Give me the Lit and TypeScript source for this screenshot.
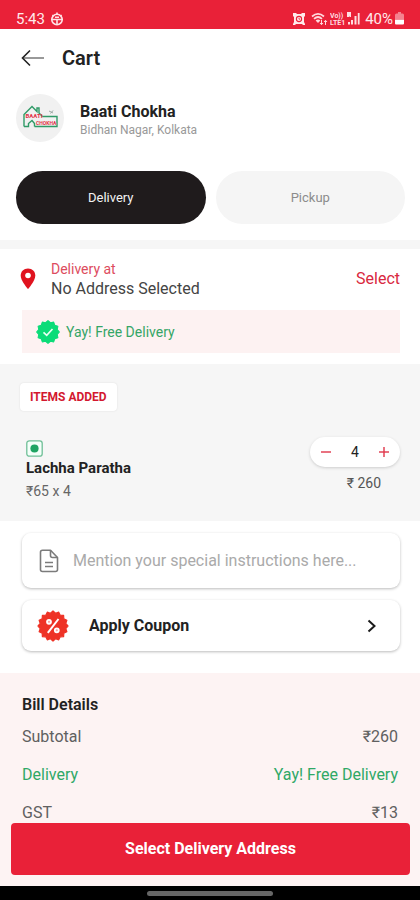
import { LitElement, html, css, svg } from "lit";
import { customElement, state } from "lit/decorators.js";

type Mode = "Delivery" | "Pickup";

/** Outline of a round badge with a scalloped edge. */
function badgePath(teeth: number, outer: number, inner: number): string {
  const points: string[] = [];
  for (let i = 0; i < teeth * 2; i++) {
    const r = i % 2 ? inner : outer;
    const a = (Math.PI * i) / teeth - Math.PI / 2;
    points.push(`${(16 + r * Math.cos(a)).toFixed(2)} ${(16 + r * Math.sin(a)).toFixed(2)}`);
  }
  return `M${points.join("L")}Z`;
}

const backIcon = html`<svg width="24" height="18" viewBox="0 0 24 18" fill="none" aria-hidden="true">
  <path d="M2 9H23" stroke="#777" stroke-width="1.5" />
  <path d="M9 1.5L1.5 9L9 16.5" stroke="#222" stroke-width="1.6" />
</svg>`;

const globeIcon = html`<svg width="14" height="14" viewBox="0 0 14 14" fill="none" stroke="#ffe3e6" stroke-width="1.6" aria-hidden="true">
  <circle cx="7" cy="7.5" r="5.2" />
  <path d="M1 7.5H13M7 7.5V12.5M5 5.2H9M2.4 3L3.6 4M11.6 3L10.4 4M7 .6V2.5" />
</svg>`;

const alarmIcon = html`<svg width="12" height="12" viewBox="0 0 12 12" aria-hidden="true">
  <path d="M0 0H3L4 1H8L9 0H12V3L11 4V9L12 11V12H10L9 11H3L2 12H0V11L1 9V4L0 3Z" fill="#ffe9eb" />
  <path d="M1 1H11V11H1Z" fill="#ffe9eb" />
  <circle cx="6" cy="6" r="2.6" fill="none" stroke="#e92138" stroke-width="1.1" />
  <path d="M6 4.8V6.2H7.2" fill="none" stroke="#e92138" stroke-width=".8" />
</svg>`;

const wifiIcon = html`<svg width="17" height="14" viewBox="0 0 17 14" fill="none" stroke="#ffd9dd" aria-hidden="true">
  <path d="M1 4.5Q7 -.8 13 4.5M3 6.8Q7 3.2 11 6.8" stroke-width="1.7" />
  <path d="M4.6 8.6Q7 6.4 9.4 8.6L7 11Z" fill="#ffd9dd" stroke="none" />
  <path d="M10.5 8V12.5M9 11L10.5 12.7L12 11M14.5 13V8.5M13 10L14.5 8.3L16 10" stroke-width="1" />
</svg>`;

const volteIcon = html`<svg width="15" height="13" viewBox="0 0 15 13" aria-hidden="true">
  <g fill="#ffdde0" font-family="Roboto, sans-serif" font-weight="700" font-size="7">
    <text x="0" y="6">Vo))</text>
    <text x="0" y="12.5">LTE1</text>
  </g>
</svg>`;

const signalIcon = html`<svg width="13" height="13" viewBox="0 0 13 13" fill="#ffdde0" aria-hidden="true">
  <path d="M0 0H4V5H3L2 4.2V5H0ZM1 10H3V12.5H1ZM4 8H6V12.5H4ZM7.5 4H9.5V12.5H7.5ZM10.8 1H12.6V12.5H10.8Z" />
</svg>`;

const batteryIcon = html`<svg width="9" height="13" viewBox="0 0 9 13" aria-hidden="true">
  <path d="M3 0H6V1.5H7.5Q9 1.5 9 3V7H0V3Q0 1.5 1.5 1.5H3Z" fill="#f4828f" />
  <path d="M0 7.5H9V11.5Q9 12.6 8 12.6H1Q0 12.6 0 11.5Z" fill="#fff" />
</svg>`;

const logo = html`<svg width="48" height="48" viewBox="0 0 48 48" role="img" aria-label="Baati Chokha logo">
  <g fill="none" stroke="#2f9a67" stroke-width="1.4">
    <path d="M8 32.5V20.5L16 12.5L21 17.5V14H23V19L26.5 22.5H41V32.5H18.5" />
    <path d="M8 32.5H12.5V29.5L16 26.5L18.5 29.5V32.5" />
  </g>
  <path d="M33 17L37 19M37 16.5L34.5 19.5" stroke="#9aa8a2" />
  <g fill="#e23346" font-family="Roboto, sans-serif" font-weight="700" font-size="6">
    <text x="9.5" y="24">BAATI</text>
    <text x="20" y="30.5" font-size="5">CHOKHA</text>
  </g>
</svg>`;

const pinIcon = html`<svg width="16" height="22" viewBox="0 0 16 22" aria-hidden="true">
  <path d="M8 0.5C3.8 .5 .7 3.6 .7 7.7C.7 12.8 8 21 8 21S15.3 12.8 15.3 7.7C15.3 3.6 12.2 .5 8 .5Z" fill="#e0131f" />
  <circle cx="8" cy="7.5" r="2.8" fill="#fff" />
</svg>`;

const checkBadge = html`<svg width="24" height="24" viewBox="0 0 32 32" aria-hidden="true">
  <path d=${badgePath(12, 15.2, 12.8)} fill="#0bdc78" stroke="#0bdc78" stroke-width="1.4" stroke-linejoin="round" />
  <path d="M10 16.5L14.3 20.5L22 12" fill="none" stroke="#e9fff3" stroke-width="2.2" />
</svg>`;

const couponBadge = html`<svg width="32" height="32" viewBox="0 0 32 32" aria-hidden="true">
  <path d=${badgePath(16, 15, 13)} fill="#ee3326" stroke="#ee3326" stroke-width="1.2" stroke-linejoin="round" />
  <path d="M21.5 9L10.8 22.8" fill="none" stroke="#fff" stroke-width="2" />
  <g fill="#f9a49e" stroke="#fff" stroke-width="1.8">
    <circle cx="12" cy="11.8" r="2" />
    <circle cx="19.8" cy="20.3" r="2" />
  </g>
</svg>`;

const vegIcon = html`<svg width="17" height="17" viewBox="0 0 17 17" role="img" aria-label="Vegetarian">
  <rect x=".8" y=".8" width="15.4" height="15.4" rx="2.5" fill="#f4fff9" stroke="#6fbf97" stroke-width="1.3" />
  <circle cx="8.5" cy="8.5" r="4.1" fill="#1fa463" />
</svg>`;

const noteIcon = html`<svg width="20" height="24" viewBox="0 0 20 24" fill="none" stroke="#7b7b7b" stroke-width="1.6" stroke-linejoin="round" aria-hidden="true">
  <path d="M11.5 1.2H3.5Q1.5 1.2 1.5 3.2V20.5Q1.5 22.5 3.5 22.5H16.5Q18.5 22.5 18.5 20.5V8.5Z" />
  <path d="M11.5 1.2V6.5Q11.5 8.5 13.5 8.5H18.5M6 13.5H14M6 17.5H14" />
</svg>`;

const chevronIcon = html`<svg width="10" height="14" viewBox="0 0 10 14" fill="none" stroke="#1a1a1a" stroke-width="2" aria-hidden="true">
  <path d="M1.5 1.5L7.5 7L1.5 12.5" />
</svg>`;

const stepIcon = (plus: boolean) => html`<svg width="10" height="10" viewBox="0 0 10 10" stroke="#e0354a" stroke-width="1.4" aria-hidden="true">
  <path d="M0 5H10" />${plus ? svg`<path d="M5 0V10" />` : null}
</svg>`;

@customElement("app-root")
export class AppRoot extends LitElement {
  static styles = css`
    :host {
      display: flex;
      flex-direction: column;
      height: 100vh;
      background: #fff;
      color: #222;
      font-family: Roboto, "Noto Sans", sans-serif;
      font-size: 16px;
      line-height: 20px;
    }
    * {
      box-sizing: border-box;
    }
    svg {
      display: block;
      flex: none;
    }
    h1, h2, h3, p, dl, dd, dt {
      margin: 0;
    }
    button, input {
      font: inherit;
      color: inherit;
      border: 0;
      padding: 0;
      background: none;
    }
    button {
      cursor: pointer;
    }
    .status {
      flex: none;
      display: flex;
      align-items: center;
      justify-content: space-between;
      height: 29px;
      padding: 8px 16px 0;
      background: #e92138;
      color: #ffeaec;
      font-size: 15px;
    }
    .status-group {
      display: flex;
      align-items: center;
      gap: 5px;
    }
    .tight {
      gap: 2px;
    }
    .alarm {
      margin-right: 4px;
    }
    .header {
      flex: none;
      display: flex;
      align-items: center;
      gap: 17px;
      height: 56px;
      padding: 1px 21px 0;
    }
    .title {
      font-size: 20px;
      line-height: 24px;
      font-weight: 600;
    }
    .content {
      flex: 1;
      min-height: 0;
      overflow: auto;
      scrollbar-width: none;
      background: #fff;
    }
    .restaurant {
      padding: 9px 15px 16px 16px;
      border-bottom: 9px solid #f6f6f6;
    }
    .place {
      display: flex;
      align-items: center;
      gap: 16px;
    }
    .place-text {
      padding-top: 4px;
    }
    .avatar {
      border-radius: 50%;
      background: #f1f1f1;
    }
    .place-name {
      font-size: 16px;
      font-weight: 700;
      line-height: 20px;
    }
    .place-area {
      font-size: 12px;
      line-height: 16px;
      color: #999;
    }
    .modes {
      display: grid;
      grid-template-columns: 1fr 1fr;
      gap: 10px;
      margin-top: 29px;
    }
    .mode {
      height: 53px;
      border-radius: 27px;
      background: #f5f5f5;
      color: #8c8c8c;
      font-size: 13px;
    }
    .mode.active {
      background: #1f1b1c;
      color: #f2f2f2;
    }
    .address {
      padding: 10px 20px 11px;
    }
    .address-row {
      display: flex;
      align-items: center;
      gap: 15px;
      color: #444;
    }
    .address-text {
      flex: 1;
    }
    .address-label {
      font-size: 14px;
      color: #dd4c5e;
    }
    .select {
      color: #d92840;
    }
    .free {
      display: flex;
      align-items: center;
      gap: 6px;
      height: 43px;
      margin: 11px 0 0 2px;
      padding: 0 14px;
      background: #fdf2f2;
      color: #35a566;
      font-size: 14px;
    }
    .items {
      padding: 19px 20px 20px;
      background: #f6f6f6;
    }
    .tag {
      display: inline-block;
      padding: 4px 10px;
      border-radius: 4px;
      background: #fff;
      box-shadow: 0 0 2px #ddd;
      color: #d3182f;
      font-size: 12px;
      font-weight: 700;
    }
    .item {
      display: flex;
      justify-content: space-between;
      align-items: flex-start;
      margin-top: 26px;
      padding-left: 6px;
    }
    .item-info {
      padding-top: 3px;
    }
    .item-name {
      font-size: 15px;
      font-weight: 700;
      margin-top: 1px;
    }
    .item-price {
      font-size: 14px;
      color: #666;
      margin-top: 3px;
    }
    .amount {
      display: flex;
      flex-direction: column;
      align-items: flex-end;
      gap: 6px;
      font-size: 14px;
      color: #555;
    }
    .total {
      padding-right: 19px;
    }
    .stepper {
      display: flex;
      align-items: center;
      justify-content: space-between;
      width: 90px;
      height: 30px;
      border-radius: 15px;
      background: #fff;
      box-shadow: 0 1px 3px #ccc;
      color: #222;
    }
    .step {
      display: flex;
      justify-content: center;
      align-items: center;
      width: 32px;
      height: 30px;
    }
    .extras {
      display: grid;
      gap: 12px;
      padding: 12px 20px 22px 22px;
    }
    .card {
      display: flex;
      align-items: center;
      width: 100%;
      border-radius: 9px;
      background: #fff;
      box-shadow: 0 1px 3px #bbb;
    }
    .note {
      gap: 14px;
      height: 55px;
      padding: 0 17px;
    }
    .note-input {
      flex: 1;
      min-width: 0;
      outline: 0;
    }
    .note-input::placeholder {
      color: #aaa;
      opacity: 1;
    }
    .coupon {
      gap: 20px;
      height: 51px;
      padding: 0 23px 0 15px;
      text-align: left;
      font-weight: 700;
    }
    .grow {
      flex: 1;
    }
    .bill {
      padding: 22px 22px 8px;
      background: #fdf3f3;
    }
    .bill-title {
      font-size: 16px;
      font-weight: 600;
      line-height: 20px;
    }
    .bill-rows {
      display: grid;
      gap: 18px;
      margin-top: 12px;
    }
    .bill-row {
      display: flex;
      justify-content: space-between;
      color: #606060;
    }
    .bill-row.good {
      color: #2fa866;
    }
    .footer {
      flex: none;
      padding: 0 10px 11px 11px;
      background: #fdf3f3;
    }
    .submit {
      display: block;
      width: 100%;
      height: 52px;
      border-radius: 4px;
      background: #e92138;
      color: #fff;
      font-weight: 700;
    }
    .navbar {
      flex: none;
      display: flex;
      align-items: center;
      justify-content: center;
      height: 14px;
      background: #000;
    }
    .handle {
      width: 30%;
      height: 5px;
      border-radius: 3px;
      background: #666;
    }
  `;

  @state() private mode: Mode = "Delivery";
  @state() private count = 4;

  private step(delta: number) {
    this.count = Math.max(0, this.count + delta);
  }

  render() {
    const price = 65;
    const total = price * this.count;
    const rows = [
      { label: "Subtotal", value: `₹${total}`, good: false },
      { label: "Delivery", value: "Yay! Free Delivery", good: true },
      { label: "GST", value: `₹${Math.round(total * 0.05)}`, good: false },
    ];
    return html`
      <div class="status">
        <div class="status-group"><span>5:43</span>${globeIcon}</div>
        <div class="status-group">
          <div class="status-group tight">
            <span class="alarm">${alarmIcon}</span>${wifiIcon}${volteIcon}${signalIcon}
          </div>
          <div class="status-group tight"><span>40%</span>${batteryIcon}</div>
        </div>
      </div>
      <header class="header">
        <button aria-label="Back">${backIcon}</button>
        <h1 class="title">Cart</h1>
      </header>
      <main class="content">
        <section class="restaurant">
          <div class="place">
            <div class="avatar">${logo}</div>
            <div class="place-text">
              <h2 class="place-name">Baati Chokha</h2>
              <p class="place-area">Bidhan Nagar, Kolkata</p>
            </div>
          </div>
          <div class="modes">
            ${(["Delivery", "Pickup"] as Mode[]).map(
              (m) => html`<button
                class="mode ${m === this.mode ? "active" : ""}"
                aria-pressed=${m === this.mode ? "true" : "false"}
                @click=${() => (this.mode = m)}
              >${m}</button>`
            )}
          </div>
        </section>
        <section class="address">
          <div class="address-row">
            ${pinIcon}
            <div class="address-text">
              <p class="address-label">Delivery at</p>
              <p>No Address Selected</p>
            </div>
            <button class="select">Select</button>
          </div>
          <p class="free">${checkBadge}Yay! Free Delivery</p>
        </section>
        <section class="items">
          <h2 class="tag">ITEMS ADDED</h2>
          <div class="item">
            <div class="item-info">
              ${vegIcon}
              <h3 class="item-name">Lachha Paratha</h3>
              <p class="item-price">₹${price} x ${this.count}</p>
            </div>
            <div class="amount">
              <div class="stepper">
                <button class="step" aria-label="Remove one" @click=${() => this.step(-1)}>${stepIcon(false)}</button>
                <span>${this.count}</span>
                <button class="step" aria-label="Add one" @click=${() => this.step(1)}>${stepIcon(true)}</button>
              </div>
              <span class="total">₹ ${total}</span>
            </div>
          </div>
        </section>
        <section class="extras">
          <label class="card note">
            ${noteIcon}
            <input class="note-input" type="text" aria-label="Special instructions" placeholder="Mention your special instructions here..." />
          </label>
          <button class="card coupon">${couponBadge}<span class="grow">Apply Coupon</span>${chevronIcon}</button>
        </section>
        <section class="bill">
          <h2 class="bill-title">Bill Details</h2>
          <dl class="bill-rows">
            ${rows.map(
              (r) => html`<div class="bill-row ${r.good ? "good" : ""}"><dt>${r.label}</dt><dd>${r.value}</dd></div>`
            )}
          </dl>
        </section>
      </main>
      <footer class="footer"><button class="submit">Select Delivery Address</button></footer>
      <div class="navbar"><div class="handle"></div></div>
    `;
  }
}
